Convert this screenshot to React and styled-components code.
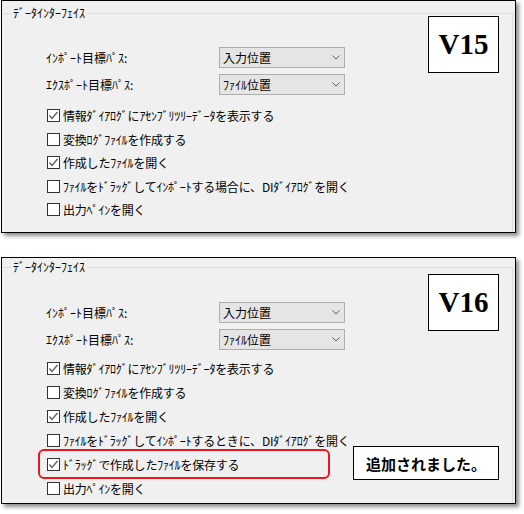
import styled, { createGlobalStyle } from 'styled-components'

const GlobalStyle = createGlobalStyle`
  html, body {
    margin: 0;
    padding: 0;
    background: #fff;
  }
  body {
    font-family: "Noto Sans CJK JP", "Noto Sans", sans-serif;
    font-size: 12px;
    color: #000;
  }
`

const rowsV15 = [
  { text: '情報ﾀﾞｲｱﾛｸﾞにｱｾﾝﾌﾞﾘﾂﾘｰﾃﾞｰﾀを表示する', checked: true },
  { text: '変換ﾛｸﾞﾌｧｲﾙを作成する' },
  { text: '作成したﾌｧｲﾙを開く', checked: true },
  { text: 'ﾌｧｲﾙをﾄﾞﾗｯｸﾞしてｲﾝﾎﾟｰﾄする場合に、DIﾀﾞｲｱﾛｸﾞを開く' },
  { text: '出力ﾍﾟｲﾝを開く' },
]

const rowsV16 = [
  { text: '情報ﾀﾞｲｱﾛｸﾞにｱｾﾝﾌﾞﾘﾂﾘｰﾃﾞｰﾀを表示する', checked: true },
  { text: '変換ﾛｸﾞﾌｧｲﾙを作成する' },
  { text: '作成したﾌｧｲﾙを開く', checked: true },
  { text: 'ﾌｧｲﾙをﾄﾞﾗｯｸﾞしてｲﾝﾎﾟｰﾄするときに、DIﾀﾞｲｱﾛｸﾞを開く' },
  { text: 'ﾄﾞﾗｯｸﾞで作成したﾌｧｲﾙを保存する', checked: true, highlight: true },
  { text: '出力ﾍﾟｲﾝを開く' },
]

function Chevron() {
  return (
    <svg width="8" height="5" viewBox="0 0 8 5">
      <polyline points="0.5,0.5 4,4 7.5,0.5" fill="none" stroke="#606060" strokeWidth="1" />
    </svg>
  )
}

function CheckMark() {
  return (
    <svg width="11" height="11" viewBox="0 0 11 11">
      <polyline points="1.5,5.5 4,8.5 9.5,2" fill="none" stroke="#5a5a5a" strokeWidth="1.3" />
    </svg>
  )
}

function Settings({ version, rows, layout, note }) {
  return (
    <Panel $height={layout.height}>
      <Group $top={layout.groupTop}>
        <Legend>ﾃﾞｰﾀｲﾝﾀｰﾌｪｲｽ</Legend>
        <Form $top={layout.formTop}>
          <FieldLabel>ｲﾝﾎﾟｰﾄ目標ﾊﾟｽ:</FieldLabel>
          <Select>入力位置<Chevron /></Select>
          <FieldLabel>ｴｸｽﾎﾟｰﾄ目標ﾊﾟｽ:</FieldLabel>
          <Select>ﾌｧｲﾙ位置<Chevron /></Select>
        </Form>
        <CheckList $top={layout.listTop}>
          {rows.map((r) => (
            <CheckRow key={r.text} $h={layout.rowH} $highlight={r.highlight}>
              <Box>{r.checked && <CheckMark />}</Box>
              <span>{r.text}</span>
            </CheckRow>
          ))}
        </CheckList>
      </Group>
      <Badge $top={layout.badgeTop}>{version}</Badge>
      {note && <Note>{note}</Note>}
    </Panel>
  )
}

export default function App() {
  return (
    <>
      <GlobalStyle />
      <Page>
        <Settings
          version="V15"
          rows={rowsV15}
          layout={{ height: 233, groupTop: 12, formTop: 33, listTop: 9, rowH: 23.5, badgeTop: 15 }}
        />
        <Settings
          version="V16"
          rows={rowsV16}
          note="追加されました。"
          layout={{ height: 247, groupTop: 9, formTop: 34, listTop: 6, rowH: 24, badgeTop: 16 }}
        />
      </Page>
    </>
  )
}

const Page = styled.div`
  display: flex;
  flex-direction: column;
  gap: 24px;
  padding-left: 1px;
  width: 524px;
  height: 514px;
  box-sizing: border-box;
`
const Panel = styled.div`
  position: relative;
  width: 515px;
  height: ${(p) => p.$height}px;
  box-sizing: border-box;
  border: 1px solid #000;
  background: #f0f0f0;
  box-shadow: 3px 3px 4px rgba(0, 0, 0, 0.45);
  overflow: hidden;
`
const Group = styled.div`
  position: relative;
  margin: ${(p) => p.$top}px 2px 0 1px;
  border-top: 1px solid #dcdcdc;
  border-right: 1px solid #dcdcdc;
  height: 100%;
`
const Legend = styled.span`
  position: absolute;
  top: -9px;
  left: 8px;
  padding: 0 2px;
  background: #f0f0f0;
  line-height: 16px;
`
const Form = styled.div`
  display: grid;
  grid-template-columns: 173px 126px;
  row-gap: 6px;
  padding: ${(p) => p.$top}px 0 0 43px;
`
const FieldLabel = styled.span`
  line-height: 21px;
`
const Select = styled.div`
  display: flex;
  align-items: center;
  justify-content: space-between;
  height: 21px;
  box-sizing: border-box;
  padding: 0 4px 0 3px;
  background: #e5e5e5;
  border: 1px solid #adadad;
  line-height: 19px;
`
const CheckList = styled.div`
  display: flex;
  flex-direction: column;
  margin-top: ${(p) => p.$top}px;
  padding-left: 44px;
`
const CheckRow = styled.div`
  position: relative;
  display: flex;
  align-items: center;
  gap: 3px;
  height: ${(p) => p.$h}px;
  letter-spacing: -0.2px;
  &::before {
    content: '';
    display: ${(p) => (p.$highlight ? 'block' : 'none')};
    position: absolute;
    left: -9px;
    top: -3px;
    width: 292px;
    bottom: -3px;
    border: 2px solid #f0141e;
    border-radius: 6px;
    box-sizing: border-box;
  }
`
const Box = styled.span`
  display: flex;
  align-items: center;
  justify-content: center;
  width: 13px;
  height: 13px;
  box-sizing: border-box;
  border: 1px solid #333;
  background: #fff;
`
const Badge = styled.div`
  position: absolute;
  top: ${(p) => p.$top}px;
  left: 426px;
  width: 71px;
  height: 57px;
  box-sizing: border-box;
  display: flex;
  align-items: center;
  justify-content: center;
  background: #fff;
  border: 1px solid #000;
  font-family: "Liberation Serif", "DejaVu Serif", serif;
  font-weight: bold;
  font-size: 29px;
`
const Note = styled.div`
  position: absolute;
  left: 351px;
  top: 188px;
  width: 146px;
  height: 34px;
  box-sizing: border-box;
  display: flex;
  align-items: center;
  justify-content: center;
  background: #fff;
  border: 1px solid #000;
  font-weight: bold;
  font-size: 15px;
`
